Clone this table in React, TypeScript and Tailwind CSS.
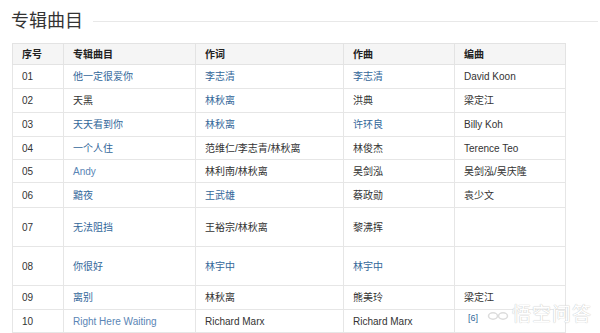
import React from "react";

type Cell = { t: string; b?: boolean; light?: boolean };
type Row = { h: number; cells: Cell[] };

const rows: Row[] = [
  { h: 24, cells: [{ t: "01" }, { t: "他一定很爱你", b: true }, { t: "李志清", b: true }, { t: "李志清", b: true }, { t: "David Koon" }] },
  { h: 24, cells: [{ t: "02" }, { t: "天黑" }, { t: "林秋离", b: true }, { t: "洪典" }, { t: "梁定江" }] },
  { h: 24, cells: [{ t: "03" }, { t: "天天看到你", b: true }, { t: "林秋离", b: true }, { t: "许环良", b: true }, { t: "Billy Koh" }] },
  { h: 23, cells: [{ t: "04" }, { t: "一个人住", b: true }, { t: "范维仁/李志青/林秋离" }, { t: "林俊杰" }, { t: "Terence Teo" }] },
  { h: 23, cells: [{ t: "05" }, { t: "Andy", b: true, light: true }, { t: "林利南/林秋离" }, { t: "吴剑泓" }, { t: "吴剑泓/吴庆隆" }] },
  { h: 25, cells: [{ t: "06" }, { t: "黯夜", b: true }, { t: "王武雄", b: true }, { t: "蔡政勋" }, { t: "袁少文" }] },
  { h: 39, cells: [{ t: "07" }, { t: "无法阻挡", b: true }, { t: "王裕宗/林秋离" }, { t: "黎沸挥" }, { t: "" }] },
  { h: 39, cells: [{ t: "08" }, { t: "你很好", b: true }, { t: "林宇中", b: true }, { t: "林宇中", b: true }, { t: "" }] },
  { h: 24, cells: [{ t: "09" }, { t: "离别", b: true }, { t: "林秋离" }, { t: "熊美玲" }, { t: "梁定江" }] },
];

const font = { fontFamily: '"Liberation Sans", "Noto Sans CJK SC", sans-serif' };

export default function App() {
  return (
    <div className="relative w-[600px] h-[333px] overflow-hidden bg-white" style={font}>
      <div className="flex items-center pl-[11px] pt-[8px]">
        <div className="text-[18px] leading-[26px] text-[#333333]">专辑曲目</div>
        <div className="ml-[10px] mr-[2px] h-px flex-1 bg-[#e8e8e8]" />
      </div>
      <table className="ml-[12px] mt-[9px] border-collapse text-[10px] text-[#333333] w-[553px] table-fixed">
        <colgroup>
          <col className="w-[51px]" />
          <col className="w-[132px]" />
          <col className="w-[148px]" />
          <col className="w-[111px]" />
          <col className="w-[111px]" />
        </colgroup>
        <thead>
          <tr className="h-[21px] bg-[#f5f5f5]">
            {["序号", "专辑曲目", "作词", "作曲", "编曲"].map((h) => (
              <th key={h} className="border border-[#e3e3e3] pl-[9px] text-left font-bold text-[#222222] align-middle">
                {h}
              </th>
            ))}
          </tr>
        </thead>
        <tbody>
          {rows.map((r, i) => (
            <tr key={i} style={{ height: r.h }}>
              {r.cells.map((c, j) => (
                <td
                  key={j}
                  className={
                    "border border-[#e6e6e6] pl-[9px] align-middle " +
                    (c.b ? (c.light ? "text-[#5a85b5]" : "text-[#33679a]") : "")
                  }
                >
                  {c.t}
                </td>
              ))}
            </tr>
          ))}
          <tr className="h-[23px]">
            <td className="border border-[#e6e6e6] pl-[9px] align-middle">10</td>
            <td className="border border-[#e6e6e6] pl-[9px] align-middle text-[#5a85b5]">Right Here Waiting</td>
            <td className="border border-[#e6e6e6] pl-[9px] align-middle">Richard Marx</td>
            <td className="border border-[#e6e6e6] pl-[9px] align-middle">Richard Marx</td>
            <td className="border border-[#e6e6e6] pl-[13px] pt-[0px] align-top">
              <span className="text-[9px] leading-[11px] text-[#33679a]">[6]</span>
            </td>
          </tr>
        </tbody>
      </table>
      <div className="absolute left-[487px] top-[304px] flex items-center gap-[3px]">
        <svg width="22" height="14" viewBox="0 0 22 14" fill="none">
          <ellipse cx="6" cy="8" rx="4.5" ry="3.2" stroke="#dcdcdc" strokeWidth="1.5" />
          <ellipse cx="16" cy="8" rx="4.5" ry="3.2" stroke="#dcdcdc" strokeWidth="1.5" />
        </svg>
        <span
          className="text-[19px] leading-[22px] text-white tracking-[1px]"
          style={{ textShadow: "0 0 1px #c8c8c8, 0 0 1px #c8c8c8" }}
        >
          悟空问答
        </span>
      </div>
    </div>
  );
}
